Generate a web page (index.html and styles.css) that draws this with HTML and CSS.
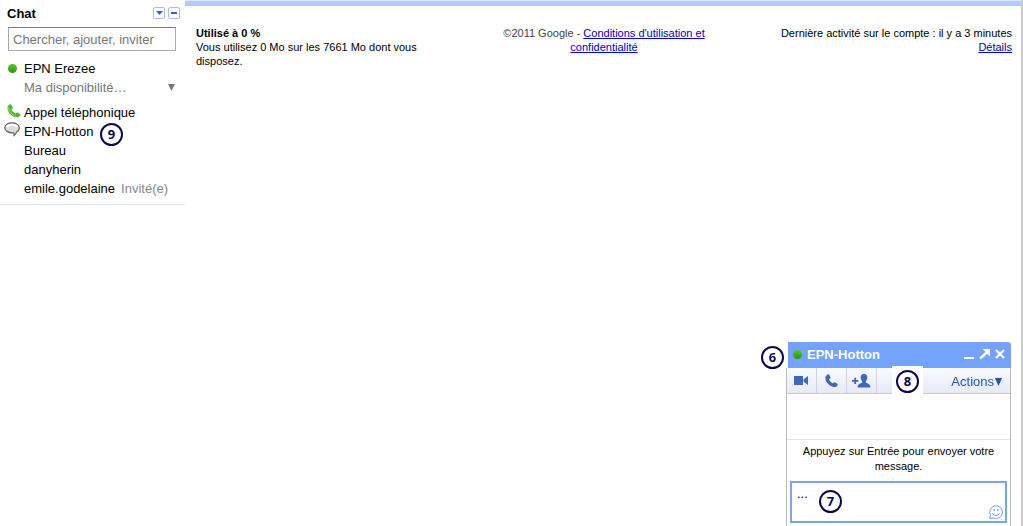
FILE: index.html
```html
<!DOCTYPE html>
<html lang="fr">
<head>
	<meta charset="utf-8">
	<title>Chat</title>
	<link rel="stylesheet" href="styles.css">
</head>
<body>
	<aside class="sidebar">
		<div class="chat_header">
			<h2>Chat</h2>
			<button class="mini_btn" aria-label="Options">
				<svg width="7" height="4" viewBox="0 0 7 4"><path d="M0 0h7L3.500 4z" fill="#3b5bd0"/></svg>
			</button>
			<button class="mini_btn" aria-label="Réduire">
				<svg width="6" height="2" viewBox="0 0 6 2"><path d="M0 0h6v2H0z" fill="#3b5bd0"/></svg>
			</button>
		</div>
		<input class="search" type="text" placeholder="Chercher, ajouter, inviter" aria-label="Chercher, ajouter, inviter">
		<div class="me">
			<div class="row"><span class="icon"><span class="dot"></span></span>EPN Erezee</div>
			<button class="row status"><span>Ma disponibilité…</span>
				<svg width="7" height="7" viewBox="0 0 7 7"><path d="M0 0h7L3.500 7z" fill="#777"/></svg>
			</button>
		</div>
		<ul class="contacts">
			<li class="row">
				<span class="icon"><svg width="14" height="15" viewBox="0 0 14 15"><path d="M.8 2L3 .3Q4 0 4.500 1l1.200 2.300q.2.800-.4 1.200L4.300 5.300C5 7.400 6.300 8.700 8.400 9.700l1-.9q.6-.5 1.300-.1l2.200 1.400q.8.600.3 1.300L11.700 13C6 15-1.300 7.500.8 2z" fill="#4cb82c"/><path d="M1.500 3.200Q2 9.500 8.500 12.300" fill="none" stroke="#93e068"/></svg></span>Appel téléphonique
			</li>
			<li class="row">
				<span class="icon bubble"><svg width="17" height="15" viewBox="0 0 17 15"><path d="M8 .8c4.200 0 7.300 2 7.300 4.900 0 2-1.100 3.500-2.900 4.400-.2 1.300-1 2.500-2.400 3.400.2-1 .1-1.900-.3-2.700C4.700 11.300.8 8.900.8 5.700.8 2.800 3.900.8 8 .8z" fill="#dedede" stroke="#666" stroke-width="1.200"/><path d="M2.800 5Q4 2.700 8 2.700t5 2.300" fill="none" stroke="#fff" stroke-width="2"/></svg></span>EPN-Hotton
				<span class="badge badge_contact">9</span>
			</li>
			<li class="row"><span class="icon"></span>Bureau</li>
			<li class="row"><span class="icon"></span>danyherin</li>
			<li class="row"><span class="icon"></span>emile.godelaine<span class="guest">Invité(e)</span></li>
		</ul>
	</aside>

	<main class="mail">
		<footer class="footer">
			<div class="quota"><strong>Utilisé à 0 %</strong><br>Vous utilisez 0 Mo sur les 7661 Mo dont vous disposez.</div>
			<div class="legal">©2011 Google - <a href="#">Conditions d'utilisation et<br>confidentialité</a></div>
			<div class="activity">Dernière activité sur le compte : il y a 3 minutes<br><a href="#">Détails</a></div>
		</footer>
	</main>

	<section class="chat_window">
		<span class="badge badge_title">6</span>
		<header class="title_bar">
			<span class="dot"></span>
			<h3>EPN-Hotton</h3>
			<button aria-label="Réduire"><svg width="10" height="12" viewBox="0 0 10 12"><path d="M0 9h10v2H0z" fill="#fff"/></svg></button>
			<button aria-label="Détacher"><svg width="11" height="12" viewBox="0 0 11 12"><path d="M3.500 1H11v7.500L8.400 5.700 2 11.500.3 9.800l6.200-6z" fill="#fff"/></svg></button>
			<button aria-label="Fermer"><svg width="10" height="12" viewBox="0 0 10 12"><path d="M1 2l8 8M9 2l-8 8" stroke="#fff" stroke-width="2.200"/></svg></button>
		</header>
		<div class="window_body">
			<div class="toolbar">
				<button class="tool" aria-label="Vidéo"><svg width="15" height="9" viewBox="0 0 15 9"><path d="M0 0h9v9H0zM14 0v9L9.500 5.500v-2z" fill="#3d67bb"/></svg></button>
				<button class="tool" aria-label="Appeler"><svg width="13" height="14" viewBox="0 0 13 14"><path d="M.8 2L3 .3Q4 0 4.400 1l1 2.300q.2.800-.4 1.200L4 5.300C4.700 7.200 6 8.500 8 9.400l.9-.9q.6-.5 1.300-.1l2.100 1.300q.8.600.3 1.300l-1.300 1.700C5.700 14.500-1.300 7.500.8 2z" fill="#3d67bb"/></svg></button>
				<button class="tool" aria-label="Ajouter une personne"><svg width="19" height="14" viewBox="0 0 19 14"><path d="M0 6h2.300V3.700h1.800V6h2.300v1.800H4.100v2.300H2.300V7.800H0z" fill="#3d67bb"/><path d="M12 0c2.300 0 3.500 1.500 3.300 3.800-.1 1.500-.7 2.700-1.500 3.400v1.500c2.300.8 4.500 1.500 4.700 4.800H5.500c.2-3.300 2.400-4 4.700-4.800V7.200C9.400 6.500 8.800 5.300 8.700 3.800 8.500 1.500 9.700 0 12 0z" fill="#3d67bb"/></svg></button>
				<button class="actions">Actions<svg width="7" height="8" viewBox="0 0 7 8"><path d="M0 0h7L3.500 8z" fill="#1c55b8"/></svg></button>
				<span class="badge_box"><span class="badge">8</span></span>
			</div>
			<div class="messages"></div>
			<p class="hint">Appuyez sur Entrée pour envoyer votre message.</p>
			<div class="reply">
				<textarea aria-label="Message">...</textarea>
				<span class="badge badge_reply">7</span>
				<button class="smiley" aria-label="Émoticônes"><svg width="14" height="14" viewBox="0 0 14 14" fill="none" stroke="#6f9fe8"><path d="M.6 13.400l1-3A6.400 6.400 0 1 1 4.500 13z"/><path d="M3.500 8c1 3.200 6 3.200 7 0"/><path d="M5.200 4v2M8.800 4v2" stroke-width="1.300"/></svg></button>
			</div>
		</div>
	</section>
</body>
</html>
```
FILE: styles.css
```css
* {
	box-sizing: border-box;
}
body {
	margin: 0;
	display: flex;
	min-height: 100vh;
	background: #fff;
	color: #000;
	font-family: "Liberation Sans", Arial, sans-serif;
	font-size: 13px;
}
button {
	padding: 0;
	border: 0;
	background: none;
	font: inherit;
	display: flex;
	align-items: center;
	justify-content: center;
}
h2, h3, p, ul {
	margin: 0;
	padding: 0;
	font-size: 13px;
}
a {
	color: #0000cc;
}

/* left column */
.sidebar {
	width: 185px;
	align-self: flex-start;
	padding-bottom: 6px;
	border-bottom: 1px solid #dde5f0;
}
.chat_header {
	display: flex;
	align-items: center;
	gap: 3px;
	height: 27px;
	padding: 0 5px 1px 7px;
}
.chat_header h2 {
	flex: 1;
}
.mini_btn {
	width: 12px;
	height: 12px;
	border: 1px solid #a9bdf0;
	border-radius: 2px;
}
.search {
	display: block;
	width: calc(100% - 17px);
	height: 24px;
	margin: 0 9px 8px 8px;
	padding: 0 4px;
	border: 1px solid #aaa;
	border-top-color: #777;
	font: inherit;
}
.search::placeholder {
	color: #777;
}
.me {
	margin-bottom: 6px;
}
.contacts {
	list-style: none;
}
.row {
	display: flex;
	align-items: center;
	position: relative;
	height: 19px;
}
.icon {
	display: flex;
	width: 24px;
	padding: 0 0 2px 7px;
}
.bubble {
	padding: 0 0 4px 4px;
}
.dot {
	width: 9px;
	height: 9px;
	margin: 2px 0 0 1px;
	border-radius: 50%;
	background: linear-gradient(#5cc62e, #239a08);
}
.status {
	width: 100%;
	padding: 0 10px 0 24px;
	justify-content: space-between;
	color: #777;
}
.guest {
	margin-left: 6px;
	color: #888;
}

/* numbered markers */
.badge {
	display: flex;
	align-items: center;
	justify-content: center;
	width: 23px;
	height: 23px;
	padding-bottom: 2px;
	border: 2px solid #0b0650;
	border-radius: 50%;
	background: #fff;
	color: #0b0650;
	font: bold 13px "Open Sans", sans-serif;
}
.badge_contact {
	position: absolute;
	left: 100px;
	top: 1px;
}
.badge_title {
	position: absolute;
	left: -25px;
	top: 4px;
}
.badge_reply {
	position: absolute;
	left: 29px;
	top: 9px;
}
.badge_box {
	position: absolute;
	left: 105px;
	top: -2px;
	padding: 4px;
	background: #fff;
}

/* mail footer */
.mail {
	flex: 1;
	border-right: 2px solid #ccc;
}
.mail::before {
	content: "";
	display: block;
	height: 5px;
	border-top: 1px solid #dfe7ff;
	background: #b8c9fb;
}
.footer {
	display: grid;
	grid-template-columns: 1fr 1fr 1fr;
	gap: 30px;
	padding: 20px 9px 0 11px;
	font-size: 11px;
	line-height: 14px;
}
.legal {
	text-align: center;
	color: #444;
}
.activity {
	text-align: right;
	white-space: nowrap;
}

/* chat window */
.chat_window {
	position: fixed;
	right: 12px;
	bottom: 0;
	width: 225px;
}
.title_bar {
	display: flex;
	align-items: center;
	gap: 5px;
	height: 26px;
	margin-left: 2px;
	padding: 0 6px 2px 4px;
	border-radius: 0 3px 0 0;
	background: #74a3fb;
	color: #fff;
}
.title_bar .dot {
	margin-top: 0;
}
.title_bar h3 {
	flex: 1;
}
.window_body {
	border: solid #bbb;
	border-width: 0 1px;
	background: #fff;
}
.toolbar {
	display: flex;
	position: relative;
	height: 26px;
	border-bottom: 1px solid #ccc;
	background: linear-gradient(#fafbff, #e6eaf8);
}
.tool {
	width: 30px;
	border-right: 1px solid #ccd2e2;
}
.actions {
	gap: 1px;
	margin-left: auto;
	padding: 2px 8px 0 0;
	color: #1c55b8;
}
.messages {
	height: 46px;
	border-bottom: 1px solid #e4e4e4;
}
.hint {
	padding: 4px 10px 7px;
	font-size: 11px;
	line-height: 15px;
	text-align: center;
}
.reply {
	position: relative;
	margin: 0 3px;
	padding-bottom: 3px;
}
.reply textarea {
	display: block;
	width: 100%;
	height: 42px;
	padding: 3px 5px;
	border: 2px solid #7ba5e8;
	outline: 0;
	resize: none;
	font: inherit;
	line-height: 15px;
}
.smiley {
	position: absolute;
	right: 4px;
	bottom: 7px;
}
```
